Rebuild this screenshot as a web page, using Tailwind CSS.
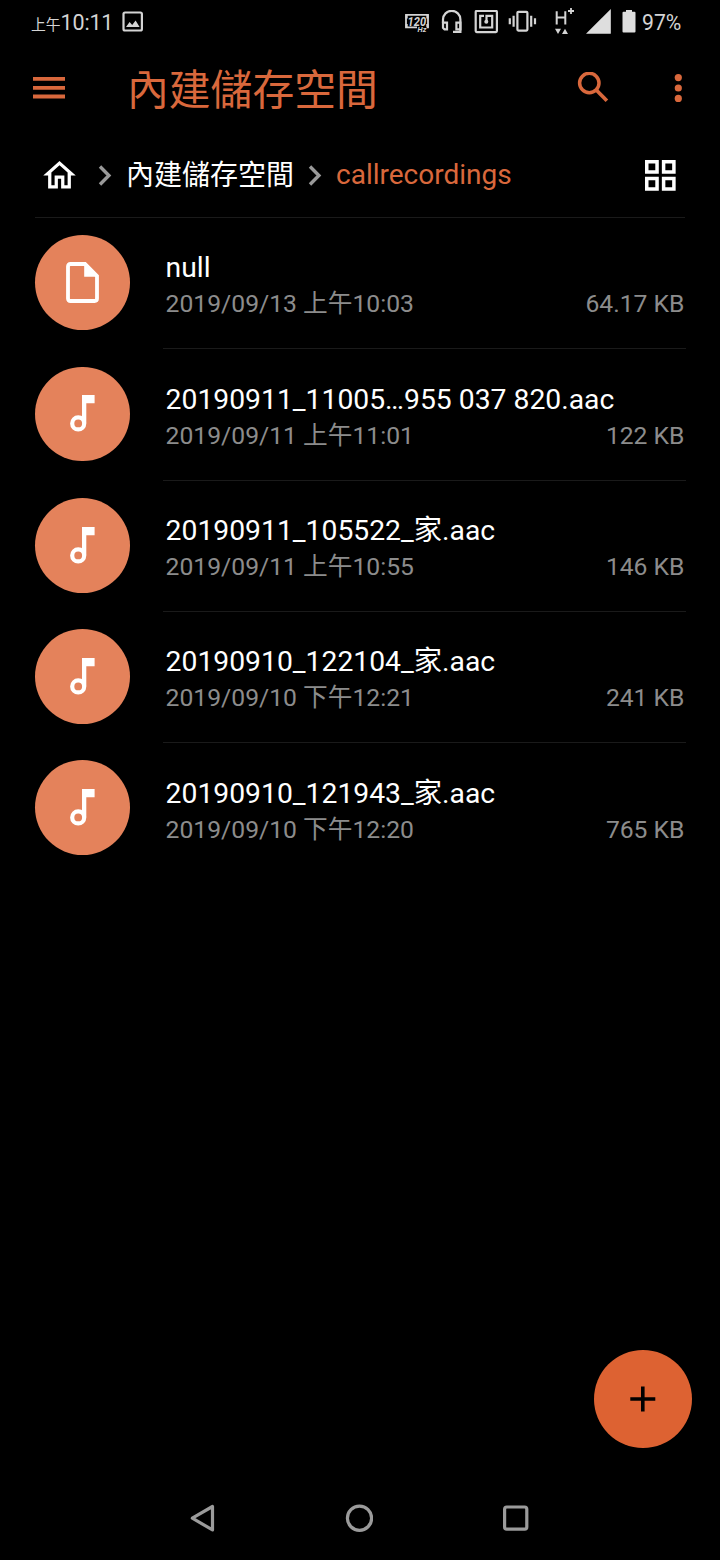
<!DOCTYPE html>
<html lang="zh-Hant">
<head>
  <meta charset="UTF-8" />
  <meta name="viewport" content="width=device-width, initial-scale=1.0"/>
  <title>內建儲存空間</title>
  <script src="https://cdn.jsdelivr.net/npm/@tailwindcss/browser@4"></script>
  <style>
    body {
      font-family: Roboto, 'Noto Sans CJK TC', sans-serif;
    }
  </style>
</head>
<body class="bg-black text-white">

  <div class="w-[720px] h-[1560px] flex flex-col overflow-hidden">

    <!-- Status bar -->
    <div class="h-11 shrink-0 flex items-center pl-[31px] pr-[38px] text-[#d4d4d4]">
      <div class="flex items-baseline w-[91px] pt-px whitespace-nowrap leading-none">
        <span class="text-[14.8px]">上午</span>
        <span class="text-[21.5px] tracking-[-0.2px]">10:11</span>
      </div>
      <svg class="w-[21px] h-[22px]" viewBox="0 0 21 22" fill="none">
        <rect x="1.5" y="1.5" width="18.4" height="18" rx="1.5" stroke="currentColor" stroke-width="2.2"/>
        <path d="M4 16l3.6-5 2.6 3 3.4-4.5L17.6 16z" fill="currentColor"/>
      </svg>

      <svg class="ml-auto w-[26px] h-6" viewBox="0 0 26 24" fill="none">
        <path d="M13 17.4H2V4.9h22v12.500h-1" stroke="currentColor" stroke-width="1.8"/>
        <path d="M2.600 5v3.500M2.600 14v3.500M23.400 5v3.500M23.400 14v3.500" stroke="currentColor" stroke-width="2.2"/>
        <text x="3.6" y="15.8" font-size="12.5" font-weight="700" font-style="italic" textLength="18.500" lengthAdjust="spacingAndGlyphs" fill="currentColor">120</text>
        <text x="13.5" y="22.4" font-size="7.5" font-weight="700" font-style="italic" fill="currentColor">Hz</text>
      </svg>
      <svg class="ml-[11px] w-[22px] h-6" viewBox="0 0 22 24" fill="none" stroke="currentColor" stroke-width="2.2">
        <path d="M2 13V9.500a8.700 8.700 0 0 1 17.400 0v12.300H12"/>
        <path d="M2 12.700h4v6.600H3.500L2 17.800zM19.400 12.700h-4v6.600h4z"/>
      </svg>
      <svg class="ml-[11px] w-6 h-6" viewBox="0 0 24 24" fill="none" stroke="currentColor" stroke-width="2.2">
        <rect x="1.7" y="0.9" width="21.2" height="21.2" rx="1"/>
        <path d="M10 5.900H6.200v11.600H18.200V5.900h-5.700v5"/>
        <circle cx="12.3" cy="11.800" r="2" fill="currentColor" stroke="none"/>
      </svg>
      <svg class="ml-[10px] w-[30px] h-6" viewBox="0 0 30 24" fill="none" stroke="currentColor" stroke-width="2.2">
        <rect x="9.400" y="1.8" width="10" height="18.8" rx="1"/>
        <path d="M1.800 8.200v6M5.600 5.700v11M23.200 5.700v11M27 8.200v6" stroke-width="2.2"/>
      </svg>
      <svg class="ml-[16px] w-[21px] h-7" viewBox="0 0 21 28" fill="none">
        <path d="M2.7 3.200v13.400M11.300 3.200v13.400M2.7 9.600h8.600" stroke="currentColor" stroke-width="2"/>
        <path d="M17 0v6M14 3h6" stroke="currentColor" stroke-width="1.8"/>
        <path d="M1 20.800h6l-3 5.300zM8 26.100h6l-3-5.300z" fill="currentColor"/>
      </svg>
      <svg class="ml-[10px] w-[26px] h-[26px]" viewBox="0 0 26 26">
        <path d="M1 24.700L25.800 0v24.200q0 .5-.5.500z" fill="#dedede"/>
      </svg>
      <svg class="ml-[11px] w-[14px] h-6" viewBox="0 0 14 24">
        <path d="M4 0h6v1.700h2.500q1 0 1 1V21.500q0 1-1 1H1.500q-1 0-1-1V2.700q0-1 1-1H4z" fill="#dedede"/>
      </svg>
      <span class="ml-[6px] w-10 pt-px text-[21.2px] leading-none">97%</span>
    </div>

    <!-- App bar -->
    <div class="h-[88px] shrink-0 flex items-center pl-[33px] pr-[37px] text-[#d9683c]">
      <svg class="w-8 h-[22px]" viewBox="0 0 32 22">
        <path d="M0 0h32v3.800H0zM0 8.900h32v3.800H0zM0 17.600h32v3.800H0z" fill="currentColor"/>
      </svg>
      <h1 class="ml-[62px] pt-1.5 text-[41.8px] leading-none">內建儲存空間</h1>
      <svg class="ml-auto w-8 h-8" viewBox="0 0 32 32" fill="none" stroke="currentColor">
        <circle cx="12.3" cy="11" r="9.7" stroke-width="3.5"/>
        <path d="M19.500 18.300l10.400 10.400" stroke-width="3.7"/>
      </svg>
      <svg class="ml-[65px] w-[9px] h-7" viewBox="0 0 9 28" fill="currentColor">
        <circle cx="4.3" cy="3.6" r="3.6"/>
        <circle cx="4.3" cy="14" r="3.6"/>
        <circle cx="4.3" cy="24.4" r="3.6"/>
      </svg>
    </div>

    <!-- Breadcrumb -->
    <div class="h-[86px] shrink-0 mx-[35px] pl-[5px] pr-[9px] flex items-center border-b border-[#1a1a1a]">
      <svg class="mt-0.5 w-[39px] h-[39px]" viewBox="0 0 24 24" fill="currentColor">
        <path d="M12 5.690l5 4.500V18h-2v-6H9v6H7v-7.810l5-4.500M12 3L2 12h3v8h6v-6h2v6h6v-8h3L12 3z"/>
      </svg>
      <svg class="mt-px ml-[19px] w-[14px] h-[21px]" viewBox="0 0 14 21" fill="none" stroke="#999" stroke-width="3.4">
        <path d="M2 1.500l8.900 9L2 19.500"/>
      </svg>
      <span class="ml-[14px] pt-[3px] text-[28px] leading-none whitespace-nowrap">內建儲存空間</span>
      <svg class="mt-px ml-[14px] w-[14px] h-[21px]" viewBox="0 0 14 21" fill="none" stroke="#999" stroke-width="3.4">
        <path d="M2 1.500l8.900 9L2 19.500"/>
      </svg>
      <span class="ml-[14px] text-[28px] leading-none text-[#d9683c]">callrecordings</span>
      <svg class="mt-0.5 ml-auto w-[31px] h-[31px]" viewBox="0 0 31 31" fill="none" stroke="currentColor" stroke-width="3.5">
        <path d="M1.750 1.750h10.300v10.300H1.750zM18.600 1.750h10.300v10.300H18.600zM1.750 18.600h10.300v10.300H1.750zM18.600 18.600h10.300v10.300H18.600z"/>
      </svg>
    </div>

    <!-- File list -->
    <ul id="fileList" class="flex-1"></ul>

    <!-- Add button -->
    <div class="shrink-0 flex justify-end pr-7">
      <button class="size-[98px] rounded-full bg-[#dd6232] flex items-center justify-center">
        <svg class="size-[26px]" viewBox="0 0 26 26" stroke="#000" stroke-width="3.6">
          <path d="M12.800 .5v25M.3 13h25"/>
        </svg>
      </button>
    </div>

    <!-- Navigation bar -->
    <div class="h-28 shrink-0 flex items-center justify-between pt-7 pl-[190px] pr-[191px] text-[#9b9b9b]">
      <svg class="w-[25px] h-7" viewBox="0 0 25 28" fill="none" stroke="currentColor" stroke-width="3.2" stroke-linejoin="round">
        <path d="M2.300 14.200L22.500 2.500v23.400z"/>
      </svg>
      <svg class="size-7" viewBox="0 0 28 28" fill="none" stroke="currentColor" stroke-width="3.2">
        <circle cx="14.5" cy="14.2" r="12.1"/>
      </svg>
      <svg class="size-[26px]" viewBox="0 0 26 26" fill="none" stroke="currentColor" stroke-width="3.2">
        <rect x="1.6" y="2" width="22.2" height="22.2" rx="2.2"/>
      </svg>
    </div>
  </div>

  <script>
    const files = [
      { name: 'null', date: '2019/09/13 上午10:03', size: '64.17 KB', type: 'file' },
      { name: '20190911_11005…955 037 820.aac', date: '2019/09/11 上午11:01', size: '122 KB', type: 'audio' },
      { name: '20190911_105522_家.aac', date: '2019/09/11 上午10:55', size: '146 KB', type: 'audio' },
      { name: '20190910_122104_家.aac', date: '2019/09/10 下午12:21', size: '241 KB', type: 'audio' },
      { name: '20190910_121943_家.aac', date: '2019/09/10 下午12:20', size: '765 KB', type: 'audio' },
    ];

    const icons = {
      file: `<svg class="w-[33px] h-[41px]" viewBox="0 0 33 41">
        <path d="M4.500 2H19l12 12v22.500q0 2.500-2.500 2.500h-24Q2 39 2 36.500v-32Q2 2 4.500 2z" fill="none" stroke="#fff" stroke-width="3.8"/>
        <path d="M18.200 1.500V14.800H32z" fill="#fff"/>
      </svg>`,
      audio: `<svg class="w-[25px] h-[37px]" viewBox="0 0 25 37">
        <circle cx="8.2" cy="28.4" r="6" fill="none" stroke="#fff" stroke-width="4.2"/>
        <path d="M12 0h12.600v8.300h-8.300v20H12z" fill="#fff"/>
      </svg>`,
    };

    document.getElementById('fileList').innerHTML = files.map((f, i) => `
      <li class="h-[131.3px] pl-[35.3px] pr-[34px] flex">
        <div class="mt-[17.3px] size-[94.7px] shrink-0 rounded-full bg-[#e4825b] flex items-center justify-center">${icons[f.type]}</div>
        <div class="ml-[33px] pl-[2.6px] flex-1 flex flex-col border-b ${i < files.length - 1 ? 'border-[#1a1a1a]' : 'border-transparent'}">
          <div class="mt-[32.4px] h-9 leading-9 text-[28.3px] whitespace-nowrap">${f.name}</div>
          <div class="h-9 leading-9 flex justify-between pr-[1.5px] text-[24.7px] text-[#8c8c8c] whitespace-nowrap">
            <span>${f.date}</span>
            <span>${f.size}</span>
          </div>
        </div>
      </li>`).join('');
  </script>
</body>
</html>
